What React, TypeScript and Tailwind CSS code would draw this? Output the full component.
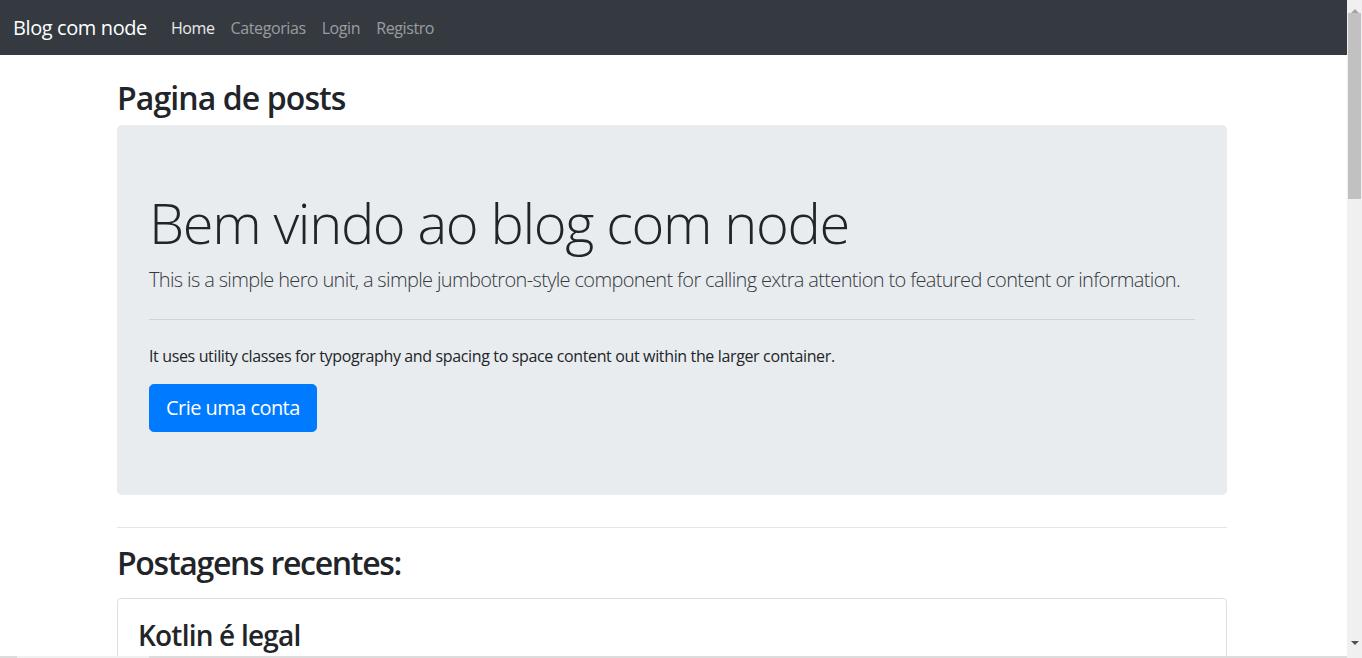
import React from "react";

const links = [
  { label: "Home", active: true },
  { label: "Categorias", active: false },
  { label: "Login", active: false },
  { label: "Registro", active: false },
];

const font = "font-['Open_Sans',sans-serif]";

const Navbar = () => (
  <nav className="flex h-[55px] items-center bg-[#343a40] pl-[13px] pr-4">
    <a href="#" className="mr-[16px] text-[20px] leading-[30px] tracking-[-0.4px] text-white">
      Blog com node
    </a>
    <ul className="flex">
      {links.map((link) => (
        <li key={link.label}>
          <a
            href="#"
            className={
              link.active
                ? "block px-2 py-2 text-[16px] tracking-[-0.4px] text-white/90"
                : "block px-2 py-2 text-[16px] tracking-[-0.4px] text-white/50"
            }
          >
            {link.label}
          </a>
        </li>
      ))}
    </ul>
  </nav>
);

const Scrollbar = () => (
  <div className="flex h-[658px] w-[15px] shrink-0 flex-col items-center bg-[#f0f0f0]">
    <div className="flex h-[13px] items-end justify-center">
      <span className="block h-0 w-0 border-x-[4px] border-b-[4px] border-x-transparent border-b-[#a3a3a3]" />
    </div>
    <div className="h-[186px] w-[13px] bg-[#c1c1c1]" />
    <div className="grow" />
    <div className="mb-[4px] flex h-[13px] items-start justify-center">
      <span className="block h-0 w-0 border-x-[4px] border-t-[4px] border-x-transparent border-t-[#505050]" />
    </div>
  </div>
);

export default function App() {
  return (
    <div className={`relative flex h-[658px] w-[1362px] overflow-hidden bg-white text-[#212529] ${font}`}>
      <div className="h-[658px] w-[1347px] shrink-0 overflow-hidden">
        <Navbar />
        <div className="ml-[117px] w-[1110px]">
          <h2 className="mt-6 mb-2 text-[32px] font-semibold leading-[1.2] tracking-[-0.9px]">
            Pagina de posts
          </h2>
          <div className="mb-8 rounded-[4.8px] bg-[#e9ecef] px-8 pt-16 pb-[63px]">
            <h1 className="mb-2 text-[56px] font-light leading-[1.2] tracking-[-1.35px]">
              Bem vindo ao blog com node
            </h1>
            <p className="whitespace-nowrap text-[20px] font-light leading-[1.5] tracking-[-0.65px] text-[#343a40]">
              This is a simple hero unit, a simple jumbotron-style component for calling extra attention to featured content or information.
            </p>
            <hr className="my-6 border-t border-black/10" />
            <p className="mb-4 text-[16px] leading-6 tracking-[-0.36px]">
              It uses utility classes for typography and spacing to space content out within the larger container.
            </p>
            <a
              href="#"
              className="inline-block rounded-[4.8px] border border-[#007bff] bg-[#007bff] px-4 py-2 text-[20px] leading-[1.5] tracking-[-0.55px] text-white"
            >
              Crie uma conta
            </a>
          </div>
          <hr className="border-t border-black/10" />
          <h2 className="mt-4 text-[32px] font-semibold leading-[1.2] tracking-[-1.3px]">
            Postagens recentes:
          </h2>
          <div className="mt-[16px] rounded-[4px] border border-black/[0.125] p-5">
            <h3 className="mb-2 text-[28px] font-semibold leading-[1.2] tracking-[-0.8px]">
              Kotlin é legal
            </h3>
            <p className="mb-4 text-[16px] leading-6">Conteudo da postagem</p>
          </div>
        </div>
      </div>
      <Scrollbar />
      <div className="absolute bottom-0 left-0 flex h-[2px] w-[1347px] bg-[#dcdcdc]">
        <div className="ml-[17px] w-[132px] bg-[#f0f0f0]" />
      </div>
    </div>
  );
}
